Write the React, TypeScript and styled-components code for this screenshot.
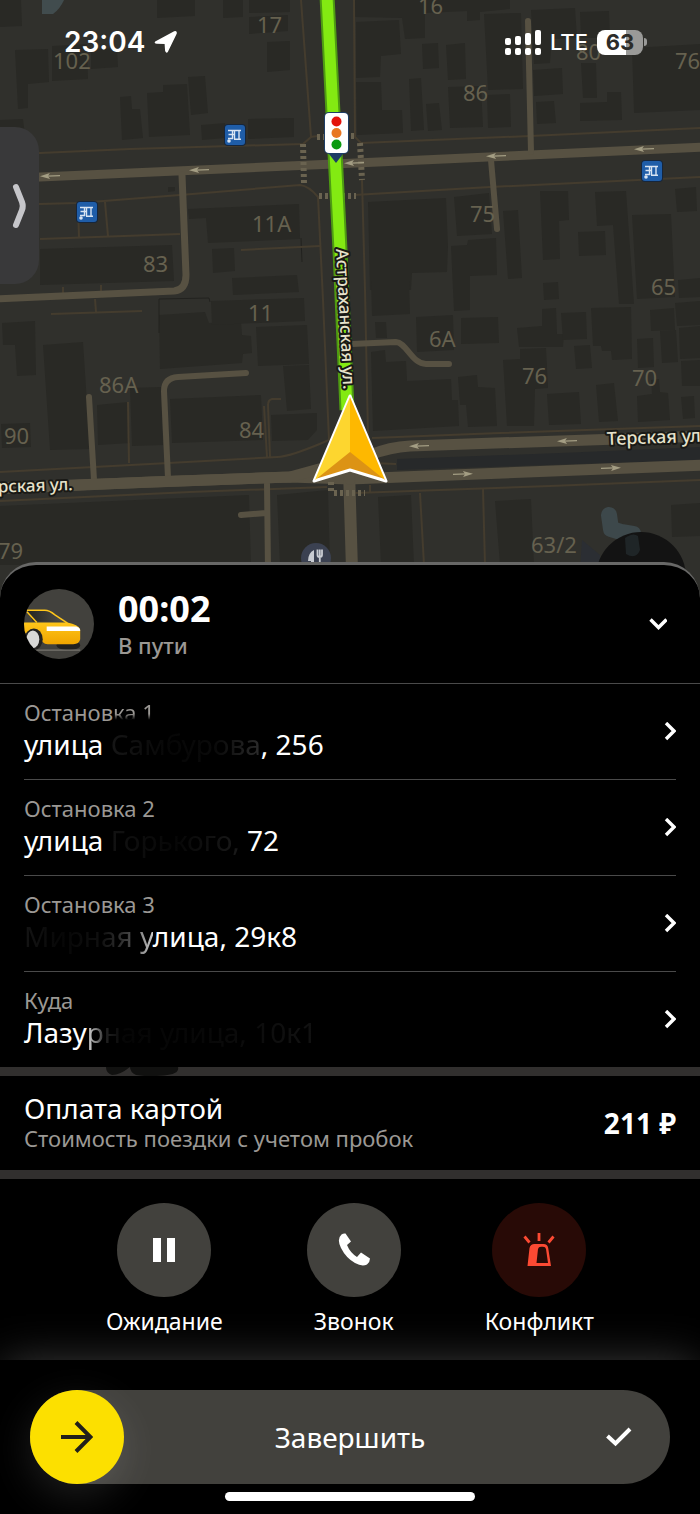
import React from "react";
import styled, { createGlobalStyle, css } from "styled-components";

const GlobalStyle = createGlobalStyle`
  *, *::before, *::after { box-sizing: border-box; }
  body {
    margin: 0;
    background: #000;
    color: #fff;
    font-family: "Noto Sans", "Open Sans", sans-serif;
  }
  button {
    margin: 0;
    padding: 0;
    border: 0;
    background: none;
    color: inherit;
    font: inherit;
    text-align: left;
    cursor: pointer;
  }
  h1, h2, p, ul { margin: 0; padding: 0; }
`;

/* ---------- page ---------- */

const Page = styled.div`
  display: flex;
  flex-direction: column;
  min-height: 100vh;
  overflow: hidden;
`;

const MapArea = styled.section`
  position: relative;
  flex: 1 0 420px;
  overflow: hidden;
  background: #30302c;
`;

const MapCanvas = styled.svg`
  position: absolute;
  top: 0;
  left: 0;
  display: block;
  width: 100%;
  height: auto;
  font-family: "Noto Sans", sans-serif;
`;

const StatusBar = styled.header`
  position: relative;
  display: flex;
  align-items: center;
  justify-content: space-between;
  height: 84px;
  padding: 0 53px 0 64px;
  font-family: Inter, "Noto Sans", sans-serif;
`;

const StatusGroup = styled.div`
  display: flex;
  align-items: center;
  gap: 9px;
`;

const Clock = styled.time`
  font-size: 28px;
  line-height: 36px;
  font-weight: 600;
`;

const Carrier = styled.span`
  font-size: 22px;
  line-height: 36px;
  font-weight: 500;
`;

const Battery = styled.span`
  display: flex;
  align-items: center;
  justify-content: center;
  width: 46px;
  height: 25px;
  border-radius: 8px;
  background: linear-gradient(90deg, #fff 63%, #9a9a98 63%);
  color: #2c2c29;
  font-size: 22px;
  line-height: 24px;
  font-weight: 700;
`;

const BatteryCell = styled.span`
  display: flex;
  align-items: center;
  gap: 1px;

  &::after {
    content: "";
    width: 3px;
    height: 8px;
    border-radius: 0 3px 3px 0;
    background: #9a9a98;
  }
`;

const DrawerHandle = styled.button`
  position: absolute;
  top: 127px;
  left: 0;
  display: flex;
  align-items: center;
  justify-content: center;
  width: 39px;
  height: 157px;
  border-radius: 0 24px 24px 0;
  background: #39393a;
`;

/* ---------- order sheet ---------- */

const Sheet = styled.main`
  position: relative;
  flex: none;
  margin-top: -36px;
  border-top: 3px solid #686867;
  border-radius: 36px 36px 0 0;
  background: #000;
`;

const TripHeader = styled.div`
  display: flex;
  align-items: center;
  gap: 24px;
  height: 118px;
  padding: 0 24px;
`;

const Avatar = styled.svg`
  flex: none;
  width: 70px;
  height: 70px;
`;

const TripInfo = styled.div`
  flex: 1;
`;

const TripTime = styled.h1`
  padding-top: 2px;
  font-size: 36px;
  line-height: 40px;
  font-weight: 700;
`;

const TripState = styled.p`
  color: #9b9894;
  font-size: 22px;
  line-height: 32px;
  font-weight: 500;
`;

const IconButton = styled.button`
  display: flex;
  align-items: center;
  justify-content: center;
  width: 36px;
  height: 36px;
`;

const StopList = styled.ul`
  list-style: none;
  border-top: 1px solid #4a4a4a;
`;

const StopItem = styled.li`
  padding: 0 24px;
`;

const StopButton = styled.button<{ $last?: boolean }>`
  display: flex;
  align-items: center;
  justify-content: space-between;
  width: 100%;
  height: ${(p) => (p.$last ? 95 : 96)}px;
  border-bottom: ${(p) => (p.$last ? "0" : "1px solid #4a4a4a")};
`;

const Lines = styled.span`
  display: flex;
  flex-direction: column;
  padding-bottom: 8px;
`;

const Caption = styled.span`
  color: #9b9894;
  font-size: 22px;
  line-height: 32px;
`;

const Primary = styled.span`
  font-size: 28px;
  line-height: 32px;
`;

const Faded = styled.span<{ $fade: string }>`
  background: linear-gradient(${(p) => p.$fade});
  background-clip: text;
  -webkit-background-clip: text;
  color: transparent;
`;

const Band = styled.div`
  display: flex;
  height: 9px;
  padding-left: 104px;
  background: #312f2e;
`;

const Payment = styled.section`
  display: flex;
  align-items: center;
  justify-content: space-between;
  height: 94px;
  padding: 0 24px;
`;

const PaymentLines = styled.div`
  display: flex;
  flex-direction: column;
  padding-bottom: 2px;
`;

const PaymentTitle = styled.h2`
  font-size: 28px;
  line-height: 32px;
  font-weight: 400;
`;

const PaymentNote = styled.p`
  color: #9b9894;
  font-size: 22px;
  line-height: 28px;
`;

const Price = styled.strong`
  font-size: 28px;
  line-height: 32px;
  font-weight: 700;
`;

const Actions = styled.nav`
  display: flex;
  justify-content: center;
  gap: 84px;
  height: 181px;
  padding-top: 24px;
`;

const Action = styled.button`
  display: flex;
  flex-direction: column;
  align-items: center;
  gap: 8px;
  align-self: flex-start;
  font-size: 23px;
  line-height: 32px;
`;

const ActionDisc = styled.span<{ $alert?: boolean }>`
  display: flex;
  align-items: center;
  justify-content: center;
  width: 94px;
  height: 94px;
  border-radius: 50%;
  ${(p) =>
    p.$alert
      ? css`background: #280a06;`
      : css`background: #42413d;`}
`;

const Footer = styled.footer`
  position: relative;
  display: flex;
  flex-direction: column;
  align-items: center;
  gap: 8px;
  padding: 30px 30px 13px;
  background: #000;
  box-shadow: 0 0 44px -4px rgba(255, 255, 255, 0.26);
`;

const FinishButton = styled.button`
  display: grid;
  grid-template-columns: 102px 1fr 102px;
  align-items: center;
  width: 100%;
  height: 94px;
  border-radius: 47px;
  background: #42413d;
`;

const Knob = styled.span`
  display: flex;
  align-items: center;
  justify-content: center;
  width: 94px;
  height: 94px;
  border-radius: 50%;
  background: #fce000;
  box-shadow: 0 12px 40px rgba(255, 255, 255, 0.12);
`;

const FinishLabel = styled.span`
  font-size: 28px;
  line-height: 32px;
  text-align: center;
`;

const CheckSlot = styled.span`
  display: flex;
  justify-content: center;
`;

const HomeIndicator = styled.div`
  width: 250px;
  height: 9px;
  border-radius: 5px;
  background: #fff;
`;

/* ---------- map ---------- */

const buildings = [
  "0,0 21,0 22,26 0,27",
  "15,50 48,49 49,82 28,84 28,108 18,109",
  "52,46 87,44 88,79 52,81",
  "91,50 117,48 118,67 91,69",
  "120,97 131,96 132,109 140,109 143,138 122,140",
  "147,93 163,92 163,85 187,84 190,135 149,137",
  "188,77 205,76 208,113 191,115",
  "157,0 195,0 195,16 157,18",
  "223,0 243,0 243,17 223,18",
  "249,0 290,0 290,12 249,13",
  "249,17 288,15 288,31 249,34",
  "267,42 290,41 290,70 267,72",
  "201,125 225,123 226,138 202,140",
  "248,119 294,118 294,137 248,139",
  "0,120 23,119 25,135 0,136",
  "188,209 299,204 300,239 208,243 206,218 189,219",
  "212,249 234,248 235,271 213,273",
  "168,187 175,187 175,191 168,192",
  "40,249 172,245 174,281 40,285",
  "232,278 297,275 299,292 233,295",
  "355,0 510,0 510,9 480,12 480,20 467,21 467,11 425,13 425,38 405,39 402,18 355,17",
  "356,22 399,20 401,54 381,56 380,77 356,78",
  "422,44 438,43 439,68 423,69",
  "446,45 465,43 466,79 448,80",
  "484,14 521,13 523,89 488,90",
  "531,10 575,8 577,38 552,39 550,63 534,64",
  "580,12 609,11 610,38 581,38",
  "409,79 421,78 424,130 411,131",
  "448,87 481,86 483,127 450,128",
  "487,95 510,94 511,127 488,128",
  "426,104 439,103 442,130 428,131",
  "356,82 381,82 382,110 402,110 403,133 357,135",
  "533,70 562,68 563,94 534,96",
  "536,102 554,101 556,123 537,124",
  "581,63 596,63 597,98 583,98",
  "580,103 607,102 607,92 621,92 622,120 580,121",
  "632,48 700,44 700,110 634,113",
  "368,202 446,198 448,246 447,272 412,273 411,290 370,290",
  "454,197 489,193 492,234 457,236",
  "503,211 518,210 522,278 508,279",
  "540,191 568,191 569,220 559,221 560,259 543,260",
  "595,192 626,191 634,304 619,304 613,225 597,226",
  "578,232 605,231 606,255 579,256",
  "675,189 696,187 697,211 677,212",
  "632,215 671,214 675,297 637,299",
  "451,246 467,245 468,240 496,238 497,275 470,276 470,310 454,311",
  "371,280 409,280 410,314 372,316",
  "543,283 558,282 559,299 544,300",
  "678,280 700,278 700,297 679,298",
  "416,317 453,315 454,350 417,352",
  "461,318 498,317 499,343 461,344",
  "517,328 542,326 542,309 556,308 557,334 564,334 563,347 519,347",
  "561,313 586,312 587,339 563,340",
  "591,308 631,307 632,359 612,360 611,351 602,351 601,346 593,346",
  "650,310 674,308 675,330 651,331",
  "675,303 700,301 700,325 677,326",
  "574,346 590,345 592,368 576,369",
  "637,339 653,338 654,367 638,368",
  "660,331 676,330 678,362 662,363",
  "679,328 700,326 700,358 680,359",
  "520,349 546,348 548,388 535,389 534,426 507,426 503,360 520,359",
  "596,385 614,383 618,421 599,422",
  "547,394 579,392 581,424 549,425",
  "637,396 652,394 651,380 659,379 660,392 668,393 670,420 638,422",
  "681,397 694,396 695,418 683,419",
  "681,361 700,360 700,386 682,386",
  "458,377 477,375 478,387 495,388 497,426 468,427 466,405 460,405",
  "371,352 385,350 386,362 406,361 407,381 451,379 452,400 458,400 459,426 373,431",
  "375,322 386,322 387,338 376,338",
  "2,323 35,321 36,375 17,376 15,345 3,345",
  "43,345 83,342 90,449 50,450",
  "159,315 205,312 209,323 241,321 242,335 251,336 252,353 243,354 242,363 160,369",
  "211,301 304,298 305,321 212,325",
  "256,327 307,325 309,364 258,366",
  "283,366 309,365 311,409 287,411",
  "97,405 128,402 130,443 98,445",
  "130,388 161,387 163,445 132,446",
  "170,399 261,395 263,440 172,443",
  "271,415 317,413 317,430 308,440 272,441",
  "1,424 30,423 31,447 2,448",
  "0,506 249,495 251,565 0,565",
  "277,495 328,490 330,565 280,565",
  "378,497 411,495 414,565 381,565",
  "495,501 531,499 534,565 500,565",
  "671,505 700,503 700,536 672,537",
];

const footways = [
  "M0 156L40 153L130 149L303 144L311 137L301 0",
  "M310 137L318 136",
  "M354 0L355 137L361 143L530 136L700 128",
  "M0 205L78 203L180 195L300 185Q309 186 318 197L323 300L329 440Q290 457 277 457L150 464L0 472",
  "M354 195L490 187L700 177",
  "M362 180L365 290L368 436",
  "M372 438L500 433L700 426",
  "M78 203L79 238M105 202L108 236M40 239L180 234",
  "M241 250L320 246",
  "M128 402L129 463",
  "M51 314L142 311M95 299L96 312M63 287L63 294M101 285L101 293",
  "M264 406L267 457M281 399L272 399Q268 400 268 405L270 457",
  "M0 501L190 492L327 487",
  "M355 493L550 486L700 480",
  "M420 493L424 565M483 489L485 565M370 485L370 492",
  "M372 463L396 464",
];

const labels: [number, number, string][] = [
  [257, 33, "17"],
  [418, 14, "16"],
  [53, 69, "102"],
  [576, 60, "80"],
  [675, 69, "76"],
  [463, 101, "86"],
  [252, 232, "11A"],
  [470, 222, "75"],
  [143, 272, "83"],
  [651, 295, "65"],
  [248, 321, "11"],
  [429, 347, "6A"],
  [522, 384, "76"],
  [632, 386, "70"],
  [99, 393, "86A"],
  [239, 438, "84"],
  [4, 444, "90"],
  [-2, 559, "79"],
  [531, 553, "63/2"],
];

const BusStop = ({ x, y }: { x: number; y: number }) => (
  <g transform={`translate(${x} ${y})`}>
    <rect x="-1" y="-1" width="22" height="22" rx="4" fill="#16263c" />
    <rect width="20" height="20" rx="3" fill="#1f5da8" />
    <g stroke="#d8e4f2" strokeWidth="1.4" fill="none">
      <path d="M3 5.500H16M9.500 5.500V14M14 5.500V14M9 14.300H16" />
      <path d="M3.500 9.500H9M7.500 5.500V13.500H3" />
    </g>
    <circle cx="4" cy="16" r="1.8" fill="#d8e4f2" />
  </g>
);

const RoadArrow = ({ x, y, right }: { x: number; y: number; right?: boolean }) => (
  <g transform={`translate(${x} ${y}) rotate(${right ? 178 : -2})`}>
    <path d="M-3 0H10" stroke="#a39d83" strokeWidth="1.4" />
    <path d="M-10 0L0 -3L-2 0L0 3Z" fill="#a39d83" />
  </g>
);

const CityMap = () => (
  <MapCanvas viewBox="0 0 700 620" role="img" aria-label="Карта маршрута">
    <rect width="700" height="620" fill="#30302c" />
    <g fill="#292925">
      {buildings.map((points) => (
        <polygon key={points} points={points} />
      ))}
    </g>
    <path d="M42 0H64Q60 9 53 14H42Z" fill="#414c4e" />
    <path d="M159 333V299L209 298L210 302M301 238L302 262" stroke="#22221f" fill="none" />
    <polygon points="397,459 560,453 700,447 700,460 397,470" fill="#27292a" />
    <g fill="none" stroke="#443c2e" strokeWidth="2">
      {footways.map((d) => (
        <path key={d} d={d} />
      ))}
    </g>
    <g fill="none" stroke="#575142" strokeLinecap="round" strokeLinejoin="round">
      <path d="M-6 179L40 177L334 164L706 147" strokeWidth="9" />
      <path d="M182 175L186 275Q186 290 174 291L-6 299" strokeWidth="7" />
      <path d="M528 21L531 152M491 160L497 229" strokeWidth="6" />
      <path d="M352 344L396 342C406 342 412 364 426 364H449" strokeWidth="6" />
      <path d="M89 397L94 480M267 484L268 570M241 515L266 513" strokeWidth="6" />
      <path d="M246 373L178 377Q164 378 164 391L168 478" strokeWidth="6" />
      <path d="M-6 489L150 482L290 477L350 479L706 465" strokeWidth="11" />
      <path d="M-6 488L290 477L370 455Q390 447 410 446L706 436" strokeWidth="11" />
      <path d="M349 470L352 570" strokeWidth="12" />
      <path d="M334 163L350 480" strokeWidth="10" />
    </g>
    <g fill="none" stroke="#6a6350" strokeWidth="6" strokeDasharray="3 3">
      <path d="M303 144L304 183M360 143L362 180" />
      <path d="M317 137H328M345 136H355M319 196H332M342 196H356M334 493H365" />
      <path d="M331 482V491" />
    </g>
    <RoadArrow x={50} y={176} />
    <RoadArrow x={199} y={170} />
    <RoadArrow x={354} y={163} />
    <RoadArrow x={496} y={156} />
    <RoadArrow x={644} y={149} />
    <RoadArrow x={419} y={446} />
    <RoadArrow x={567} y={441} />
    <RoadArrow x={463} y={474} right />
    <RoadArrow x={611} y={468} right />

    <g fill="#66614f" fontSize="22">
      {labels.map(([x, y, text]) => (
        <text key={`${x}-${y}`} x={x} y={y}>
          {text}
        </text>
      ))}
    </g>

    <path d="M609 515L611 529L621 532L633 534L634 548" stroke="#3d484b" strokeWidth="16" fill="none" strokeLinecap="round" strokeLinejoin="round" />
    <path d="M582 540L600 555V570H580Z" fill="#2b2e33" />
    <circle cx="641" cy="577" r="45" fill="#131313" />
    <path d="M625 538Q633 532 638 536L640 550Q636 560 626 554Z" fill="#1f2527" />

    <circle cx="316" cy="558" r="15" fill="#3b4151" />
    <path d="M314 550V568H311V561H308Q308 553 314 550Z" fill="#c9ccd2" />
    <path d="M317.500 549.500V555Q317.500 557 319.500 557Q322 557 322 555V549.500M319.800 549.500V568" stroke="#c9ccd2" strokeWidth="1.800" fill="none" />

    <path d="M327 -4L340 250L347 410" stroke="#4e9c12" strokeWidth="15" fill="none" />
    <path d="M327 -4L340 250L347 410" stroke="#83ea12" strokeWidth="11" fill="none" />

    <g fill="#e6e2cb" stroke="#191916" strokeWidth="4" strokeLinejoin="round" paintOrder="stroke" fontSize="17" fontWeight="500">
      <text transform="translate(336 249) rotate(87)">Астраханская ул.</text>
      <text transform="translate(607 445) rotate(-2)" fontSize="18">
        Терская ул.
      </text>
      <text transform="translate(73 490) rotate(-2)" textAnchor="end">
        Терская ул.
      </text>
    </g>

    <BusStop x={225} y={125} />
    <BusStop x={77} y={202} />
    <BusStop x={642} y={161} />

    <path d="M329 154L336 163L343 154Z" fill="#1d3d66" />
    <rect x="324" y="112" width="25" height="42" rx="5" fill="#1d3d66" />
    <rect x="325" y="113" width="23" height="40" rx="4" fill="#fff" />
    <circle cx="336.500" cy="121.500" r="5" fill="#e3120b" />
    <circle cx="336.500" cy="133" r="5" fill="#e87722" />
    <circle cx="336.500" cy="144.500" r="5" fill="#0a9a0f" />

    <path d="M350 396L386 481L350 470L314 481Z" fill="#dc9315" stroke="#fff" strokeWidth="3" strokeLinejoin="round" />
    <path d="M350 397V452L315 480Z" fill="#fdd62f" />
    <path d="M350 397V452L385 480Z" fill="#feb800" />
  </MapCanvas>
);

/* ---------- icons ---------- */

const LocationIcon = () => (
  <svg width="24" height="24" viewBox="0 0 24 24" aria-hidden="true">
    <path
      d="M2 12L20.500 2Q22.500 1.300 22 3.500L13.500 21Q12.200 23 11.800 20.500L11.300 13.200L2.800 13Q0.500 12.800 2 12Z"
      fill="#fff"
      stroke="#fff"
      strokeWidth="1.500"
      strokeLinejoin="round"
    />
  </svg>
);

const SignalIcon = () => (
  <svg width="36" height="25" viewBox="0 0 36 25" fill="#fff" aria-hidden="true">
    <rect x="0" y="8" width="6" height="7" rx="2" />
    <rect x="10" y="6" width="6" height="9" rx="2" />
    <rect x="20" y="3" width="6" height="12" rx="2" />
    <rect x="30" y="0" width="6" height="15" rx="2" />
    <rect x="0" y="18" width="6" height="7" rx="2" />
    <rect x="10" y="18" width="6" height="7" rx="2" />
    <rect x="20" y="18" width="6" height="7" rx="2" />
    <rect x="30" y="18" width="6" height="7" rx="2" />
  </svg>
);

const ChevronRight = () => (
  <svg width="12" height="20" viewBox="0 0 12 20" fill="none" aria-hidden="true">
    <path d="M2 1L10 9L2 17" stroke="#fff" strokeWidth="3.400" />
  </svg>
);

const ChevronDown = () => (
  <svg width="18" height="12" viewBox="0 0 18 12" fill="none" aria-hidden="true">
    <path d="M1.500 1.500L9.500 9.500L17.500 1.500" stroke="#fff" strokeWidth="3.400" />
  </svg>
);

const HandleChevron = () => (
  <svg width="16" height="46" viewBox="0 0 16 46" fill="none" aria-hidden="true">
    <path d="M4 4L10 19Q11.500 23 10 27L4 42" stroke="#c6c6ca" strokeWidth="6" strokeLinecap="round" strokeLinejoin="round" />
  </svg>
);

const CarAvatar = () => (
  <Avatar viewBox="0 0 71 71" role="img" aria-label="Такси">
    <defs>
      <clipPath id="disc">
        <circle cx="35.500" cy="35.500" r="35.500" />
      </clipPath>
      <linearGradient id="paint" x1="0" y1="0" x2="0" y2="1">
        <stop offset="0" stopColor="#ffc61a" />
        <stop offset="1" stopColor="#f0a500" />
      </linearGradient>
      <linearGradient id="glass" x1="0" y1="0" x2="1" y2="0">
        <stop offset="0" stopColor="#232320" />
        <stop offset="1" stopColor="#55544f" />
      </linearGradient>
    </defs>
    <g clipPath="url(#disc)">
      <rect width="71" height="71" fill="#42413d" />
      <ellipse cx="45" cy="57" rx="12" ry="5" fill="#22211f" />
      <path d="M10 62H57" stroke="#77746e" strokeWidth="1.500" />
      <path d="M3 21H23L44 33H9Z" fill="url(#glass)" />
      <path d="M0 34H44Q55 36 57 41V51Q56 56 50 56H24Q18 56 16 48Q13 40 6 42L0 46Z" fill="url(#paint)" />
      <path d="M3 21.500H21Q26 21.500 31 26L44 34.500" stroke="#ffc61a" strokeWidth="1.500" fill="none" />
      <path d="M3 23L13 34" stroke="#ffc61a" strokeWidth="1.500" />
      <path d="M23 38H53Q57 39 57 42.500H23Z" fill="#fff" />
      <ellipse cx="10" cy="51" rx="9" ry="11" fill="#22211f" />
      <ellipse cx="9" cy="51" rx="6.500" ry="9" fill="#d8d8d6" />
    </g>
  </Avatar>
);

const PauseIcon = () => (
  <svg width="22" height="24" viewBox="0 0 22 24" fill="#fff" aria-hidden="true">
    <path d="M0 0H8V24H0ZM14 0H22V24H14Z" />
  </svg>
);

const PhoneIcon = () => (
  <svg width="32" height="34" viewBox="0 0 32 34" fill="#fff" aria-hidden="true">
    <path d="M3.500 1.500Q5.500 0 7.500 0.500L13 8.500L9 12Q12 19.500 19 24L23 19.500L32 25.500Q32 29 29 31.500Q24 34 17 30Q8 25 3 15Q-1.500 6 3.500 1.500Z" />
  </svg>
);

const SirenIcon = () => (
  <svg width="32" height="34" viewBox="0 0 32 34" aria-hidden="true">
    <path d="M1.500 3.500L6.500 9.500M16 0V8M30.500 3.500L25.500 9.500" stroke="#fc4a33" strokeWidth="2.800" fill="none" />
    <path fillRule="evenodd" d="M4.500 33L6.500 15Q7.500 11 11.500 11H20.500Q24.500 11 25.200 15L28 33ZM13.500 30H25L23 16Q22.500 13.700 20 13.700H18Q15.500 13.700 15 16Z" fill="#fc4a33" />
  </svg>
);

const ArrowIcon = () => (
  <svg width="32" height="32" viewBox="0 0 32 32" fill="none" stroke="#21201a" strokeWidth="4" aria-hidden="true">
    <path d="M0 16H29M15 1.500L29.500 16L15 30.500" />
  </svg>
);

const CheckIcon = () => (
  <svg width="26" height="20" viewBox="0 0 26 20" fill="none" stroke="#fff" strokeWidth="4" aria-hidden="true">
    <path d="M1.500 9L9.500 16.500L24 2" />
  </svg>
);

/* ---------- data ---------- */

const stops: { id: string; caption: React.ReactNode; address: React.ReactNode }[] = [
  {
    id: "stop-1",
    caption: (
      <>
        Останов<Faded $fade="180deg, #9b9894 56%, #000 76%">ка 1</Faded>
      </>
    ),
    address: (
      <>
        улица <Faded $fade="90deg, #161616, #060606 40%, #0a0a0a 70%, #2c2c2c">Самбурова</Faded>, 256
      </>
    ),
  },
  {
    id: "stop-2",
    caption: "Остановка 2",
    address: (
      <>
        улица <Faded $fade="90deg, #121212, #060606 50%, #1a1a1a">Горького,</Faded> 72
      </>
    ),
  },
  {
    id: "stop-3",
    caption: "Остановка 3",
    address: (
      <>
        <Faded $fade="90deg, #141414, #060606 30%, #101010 60%, #3a3a3a 80%, #ccc">Мирная у</Faded>
        лица, 29к8
      </>
    ),
  },
  {
    id: "destination",
    caption: "Куда",
    address: (
      <>
        Лазу<Faded $fade="90deg, #ddd, #222 8%, #050505 16%, #070707 50%, #121212">рная улица, 10к1</Faded>
      </>
    ),
  },
];

export default function App() {
  return (
    <>
      <GlobalStyle />
      <Page>
        <MapArea>
          <CityMap />
          <StatusBar>
            <StatusGroup>
              <Clock>23:04</Clock>
              <LocationIcon />
            </StatusGroup>
            <StatusGroup>
              <SignalIcon />
              <Carrier>LTE</Carrier>
              <BatteryCell>
                <Battery>63</Battery>
              </BatteryCell>
            </StatusGroup>
          </StatusBar>
          <DrawerHandle type="button" aria-label="Открыть панель">
            <HandleChevron />
          </DrawerHandle>
        </MapArea>

        <Sheet>
          <TripHeader>
            <CarAvatar />
            <TripInfo>
              <TripTime>00:02</TripTime>
              <TripState>В пути</TripState>
            </TripInfo>
            <IconButton type="button" aria-label="Свернуть">
              <ChevronDown />
            </IconButton>
          </TripHeader>

          <StopList>
            {stops.map((stop, index) => (
              <StopItem key={stop.id}>
                <StopButton type="button" $last={index === stops.length - 1}>
                  <Lines>
                    <Caption>{stop.caption}</Caption>
                    <Primary>{stop.address}</Primary>
                  </Lines>
                  <ChevronRight />
                </StopButton>
              </StopItem>
            ))}
          </StopList>

          <Band>
            <svg width="76" height="9" viewBox="0 0 76 9" fill="#111110" aria-hidden="true">
              <path d="M2 0H26Q16 8 8 8Q2 6 2 0ZM26 0H74Q76 7 60 8.500Q42 10 32 8Q26 5 26 0Z" />
            </svg>
          </Band>

          <Payment>
            <PaymentLines>
              <PaymentTitle>Оплата картой</PaymentTitle>
              <PaymentNote>Стоимость поездки с учетом пробок</PaymentNote>
            </PaymentLines>
            <Price>211 ₽</Price>
          </Payment>

          <Band />

          <Actions aria-label="Действия">
            <Action type="button">
              <ActionDisc>
                <PauseIcon />
              </ActionDisc>
              Ожидание
            </Action>
            <Action type="button">
              <ActionDisc>
                <PhoneIcon />
              </ActionDisc>
              Звонок
            </Action>
            <Action type="button">
              <ActionDisc $alert>
                <SirenIcon />
              </ActionDisc>
              Конфликт
            </Action>
          </Actions>

          <Footer>
            <FinishButton type="button">
              <Knob>
                <ArrowIcon />
              </Knob>
              <FinishLabel>Завершить</FinishLabel>
              <CheckSlot>
                <CheckIcon />
              </CheckSlot>
            </FinishButton>
            <HomeIndicator />
          </Footer>
        </Sheet>
      </Page>
    </>
  );
}
